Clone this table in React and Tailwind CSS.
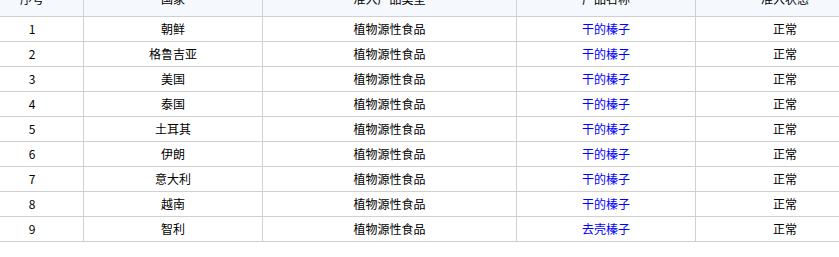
const rows = [
  { id: 1, country: '朝鲜', type: '植物源性食品', name: '干的榛子', status: '正常' },
  { id: 2, country: '格鲁吉亚', type: '植物源性食品', name: '干的榛子', status: '正常' },
  { id: 3, country: '美国', type: '植物源性食品', name: '干的榛子', status: '正常' },
  { id: 4, country: '泰国', type: '植物源性食品', name: '干的榛子', status: '正常' },
  { id: 5, country: '土耳其', type: '植物源性食品', name: '干的榛子', status: '正常' },
  { id: 6, country: '伊朗', type: '植物源性食品', name: '干的榛子', status: '正常' },
  { id: 7, country: '意大利', type: '植物源性食品', name: '干的榛子', status: '正常' },
  { id: 8, country: '越南', type: '植物源性食品', name: '干的榛子', status: '正常' },
  { id: 9, country: '智利', type: '植物源性食品', name: '去壳榛子', status: '正常' },
];

const cell = 'flex items-center justify-center border-r border-[#d0d0d0]';

export default function App() {
  return (
    <div
      className="w-[839px] h-[257px] overflow-hidden bg-white text-[12px] text-black"
      style={{ fontFamily: '"Microsoft YaHei", "Noto Sans CJK SC", sans-serif' }}
    >
      <div className="w-[893px] -ml-[19px] -mt-[18px]">
        <div className="flex h-[35px] bg-[#f5f9fd] border-b border-[#d0d0d0]">
          <div className={cn(cell, 'w-[103px]')}>序号</div>
          <div className={cn(cell, 'w-[179px]')}>国家</div>
          <div className={cn(cell, 'w-[254px]')}>准入产品类型</div>
          <div className={cn(cell, 'w-[179px]')}>产品名称</div>
          <div className="flex items-center justify-center w-[178px]">准入状态</div>
        </div>
        {rows.map(r => (
          <div key={r.id} className="flex h-[25px] border-b border-[#d0d0d0]">
            <div className={cn(cell, 'w-[103px]')}>{r.id}</div>
            <div className={cn(cell, 'w-[179px]')}>{r.country}</div>
            <div className={cn(cell, 'w-[254px]')}>{r.type}</div>
            <div className={cn(cell, 'w-[179px] text-[#0000ff]')}>{r.name}</div>
            <div className="flex items-center justify-center w-[178px]">{r.status}</div>
          </div>
        ))}
      </div>
    </div>
  );
}

function cn(...c) {
  return c.filter(Boolean).join(' ');
}
